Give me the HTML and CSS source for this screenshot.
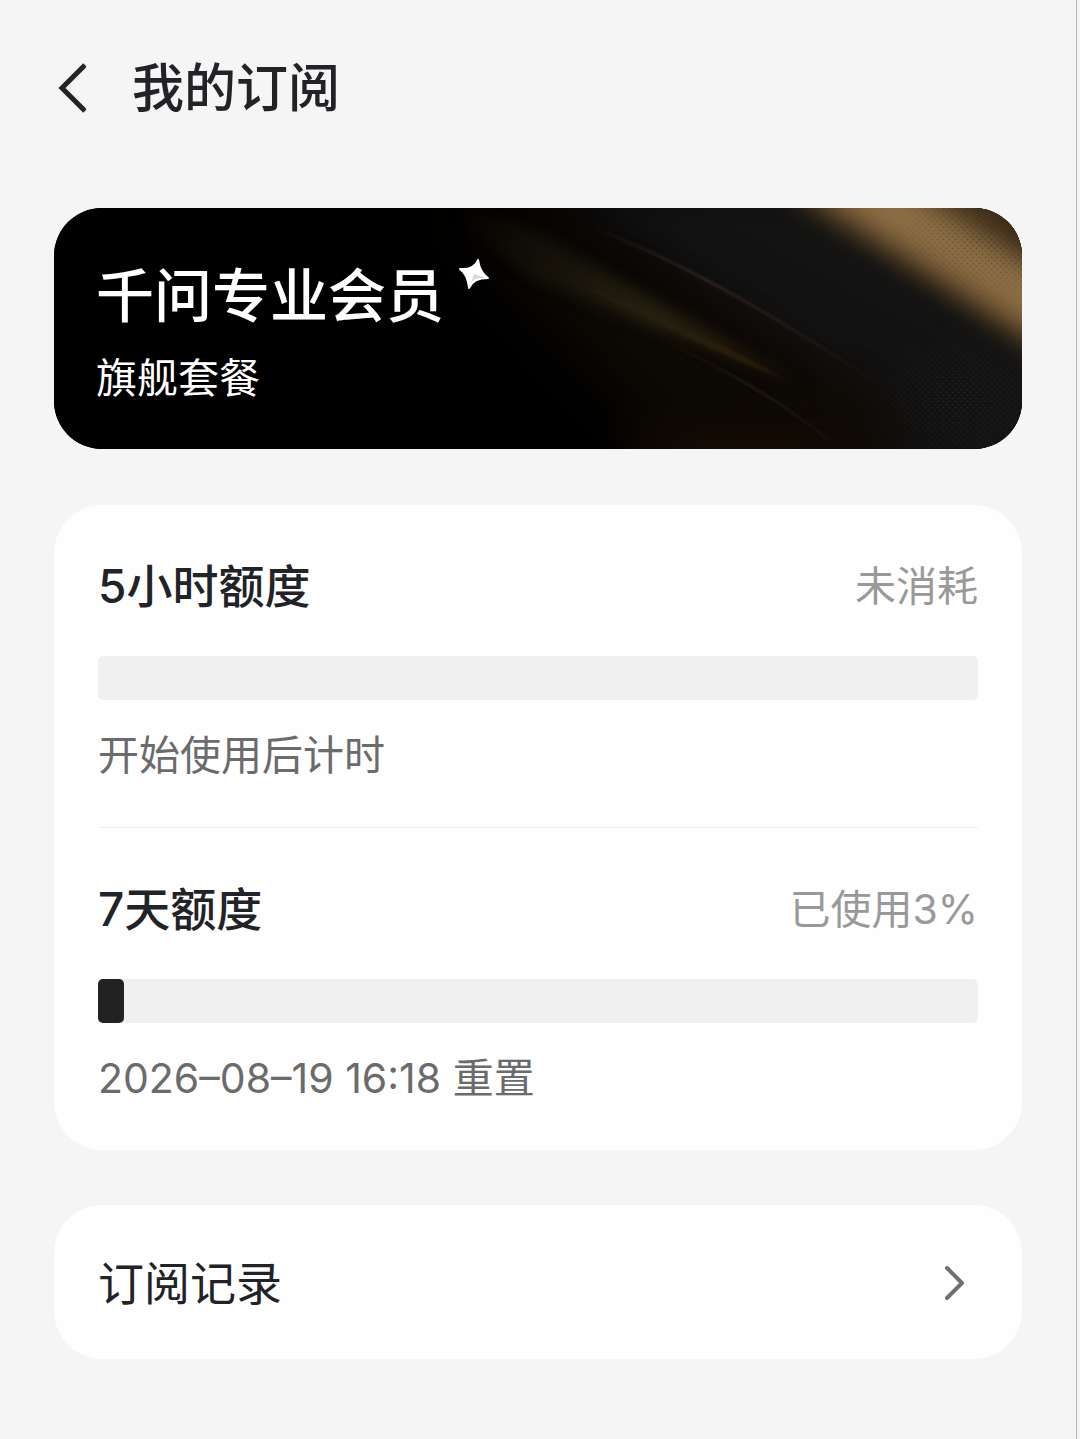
FILE: index.html
```html
<!DOCTYPE html>
<html lang="zh-CN">
<head>
    <meta charset="UTF-8">
    <meta name="viewport" content="width=device-width, initial-scale=1.0">
    <title>我的订阅</title>
    <link rel="stylesheet" href="styles.css">
</head>
<body>

    <div class="page">
        <header class="header">
            <button type="button" class="back" aria-label="返回">
                <svg width="32" height="52" viewBox="0 0 32 52" fill="none" stroke="#222326" stroke-width="5">
                    <path d="M31 2L8 25L31 48" />
                </svg>
            </button>
            <h1>我的订阅</h1>
        </header>

        <section class="member">
            <svg class="member-bg" viewBox="0 0 968 241" preserveAspectRatio="xMaxYMid slice" aria-hidden="true">
                <defs>
                    <filter id="blur1" x="-20%" y="-20%" width="140%" height="140%" color-interpolation-filters="sRGB"><feGaussianBlur stdDeviation="1" /></filter>
                    <filter id="blur6" x="-20%" y="-40%" width="140%" height="180%" color-interpolation-filters="sRGB"><feGaussianBlur stdDeviation="7" /></filter>
                    <filter id="blur12" x="-40%" y="-40%" width="180%" height="180%" color-interpolation-filters="sRGB"><feGaussianBlur stdDeviation="12" /></filter>
                    <filter id="blur40" x="-80%" y="-80%" width="260%" height="260%" color-interpolation-filters="sRGB"><feGaussianBlur stdDeviation="32" /></filter>
                    <linearGradient id="streak" gradientUnits="userSpaceOnUse" x1="400" y1="0" x2="760" y2="190">
                        <stop offset="0" stop-color="#1d190e" stop-opacity="0" />
                        <stop offset="0.550" stop-color="#242010" />
                        <stop offset="0.800" stop-color="#281c0c" />
                        <stop offset="1" stop-color="#2a1d14" stop-opacity="0" />
                    </linearGradient>
                    <linearGradient id="line" gradientUnits="userSpaceOnUse" x1="530" y1="15" x2="830" y2="180">
                        <stop offset="0" stop-color="#30241b" stop-opacity="0" />
                        <stop offset="0.400" stop-color="#30231b" />
                        <stop offset="1" stop-color="#30241b" stop-opacity="0" />
                    </linearGradient>
                    <linearGradient id="line2" gradientUnits="userSpaceOnUse" x1="600" y1="130" x2="780" y2="235">
                        <stop offset="0" stop-color="#2b2119" stop-opacity="0" />
                        <stop offset="0.600" stop-color="#261d16" />
                        <stop offset="1" stop-color="#2b2119" stop-opacity="0.300" />
                    </linearGradient>
                    <radialGradient id="fade">
                        <stop offset="0" stop-color="#fff" />
                        <stop offset="1" stop-color="#fff" stop-opacity="0" />
                    </radialGradient>
                    <pattern id="dots" width="6" height="6" patternUnits="userSpaceOnUse">
                        <circle cx="1.500" cy="1.500" r="1" fill="#333" />
                        <circle cx="4.500" cy="4.500" r="1" fill="#333" />
                    </pattern>
                    <mask id="dotArea">
                        <ellipse cx="905" cy="190" rx="110" ry="80" fill="url(#fade)" />
                        <ellipse cx="945" cy="25" rx="110" ry="70" fill="url(#fade)" />
                    </mask>
                </defs>
                <rect width="968" height="241" fill="#000" />
                <!-- soft base light -->
                <path d="M480 -30L1060 -60L1060 300L880 300Z" fill="#131313" filter="url(#blur40)" />
                <ellipse cx="700" cy="240" rx="120" ry="40" fill="#231206" filter="url(#blur40)" />
                <path d="M400 0L480 0L860 210L820 241L620 241L500 120Z" fill="#0d0904" filter="url(#blur40)" />
                <!-- streaks -->
                <path d="M370 -15L480 24L590 86L760 184L700 157L590 116L480 70Z" fill="url(#streak)" filter="url(#blur6)" />
                <path d="M530 78Q640 118 740 176Q640 136 530 78Z" fill="url(#streak)" filter="url(#blur1)" />
                <path d="M530 16Q660 65 830 180" fill="none" stroke="url(#line)" stroke-width="3" filter="url(#blur1)" />
                <path d="M600 131Q690 165 775 232" fill="none" stroke="url(#line2)" stroke-width="2" filter="url(#blur1)" />
                <!-- gold band -->
                <path d="M730 -14L1010 -60L1010 165L968 136L860 66Z" fill="#4c3820" filter="url(#blur12)" />
                <path d="M750 -24L845 -24L1000 72L1000 136L868 52Z" fill="#8c6e44" filter="url(#blur12)" />
                <path d="M895 -30L1000 -30L1000 55Z" fill="#3a230f" filter="url(#blur12)" />
                <rect width="968" height="241" fill="url(#dots)" mask="url(#dotArea)" opacity="0.600" />
            </svg>
            <div class="member-text">
                <div class="member-title">
                    <h2>千问专业会员</h2>
                    <svg class="spark" width="32" height="32" viewBox="0 0 32 32">
                        <path d="M20 2Q22 15 30 20Q15 20 11 30Q10 17 2 11Q16 12 20 2Z" fill="#fff" stroke="#fff" stroke-width="2" stroke-linejoin="round" />
                        <path d="M16 16L29 20Q16 19 13 25Z" fill="#d8d8d8" />
                    </svg>
                </div>
                <p>旗舰套餐</p>
            </div>
        </section>

        <section class="card">
            <div class="quota">
                <div class="quota-head">
                    <h3 id="quota5h">5小时额度</h3>
                    <span class="used">未消耗</span>
                </div>
                <div class="track" role="progressbar" aria-labelledby="quota5h" aria-valuenow="0">
                    <div class="fill" style="width: 0%"></div>
                </div>
                <p class="note">开始使用后计时</p>
            </div>
            <div class="quota">
                <div class="quota-head">
                    <h3 id="quota7d">7天额度</h3>
                    <span class="used">已使用3%</span>
                </div>
                <div class="track" role="progressbar" aria-labelledby="quota7d" aria-valuenow="3">
                    <div class="fill" style="width: 3%"></div>
                </div>
                <p class="note">2026–08–19 16:18 重置</p>
            </div>
        </section>

        <a href="#" class="card record">
            <span>订阅记录</span>
            <svg width="24" height="36" viewBox="0 0 24 36" fill="none" stroke="#707070" stroke-width="4" stroke-linecap="round" stroke-linejoin="round">
                <path d="M5 3L20 18L5 33" />
            </svg>
        </a>
    </div>

</body>
</html>
```
FILE: styles.css
```css
* {
    box-sizing: border-box;
}
html {
    background-color: #f5f5f5;
}
body {
    margin: 0;
    font-family: Inter, "Noto Sans CJK SC", sans-serif;
    color: #222326;
}
h1, h2, h3, p {
    margin: 0;
}
.page {
    min-height: 100vh;
    margin-right: 3px;
    padding: 49px 54px;
    border-right: 1px solid #b8b8b8;
}
.header {
    display: flex;
    align-items: center;
    gap: 46px;
    margin-bottom: 79px;
}
.header h1 {
    font-size: 52px;
    line-height: 80px;
    font-weight: 500;
}
.back {
    display: flex;
    padding: 0;
    border: none;
    background: none;
    cursor: pointer;
}
.member {
    position: relative;
    overflow: hidden;
    margin-bottom: 56px;
    padding: 48px 42px 47px;
    border-radius: 48px;
    background-color: #000;
    color: #fff;
}
.member-bg {
    position: absolute;
    top: 0;
    left: 0;
    width: 100%;
    height: 100%;
}
.member-text {
    position: relative;
}
.member-title {
    display: flex;
    align-items: flex-start;
    gap: 14px;
    margin-bottom: 18px;
}
.member-title h2 {
    font-size: 58px;
    line-height: 80px;
    font-weight: 500;
}
.spark {
    margin-top: 2px;
}
.member p {
    font-size: 41px;
    line-height: 48px;
}
.card {
    display: block;
    margin-bottom: 55px;
    padding: 0 44px;
    border-radius: 48px;
    background-color: #fefefe;
}
.quota {
    padding: 51px 0 48px;
}
.quota + .quota {
    border-top: 1px solid #f0f0f0;
}
.quota-head {
    display: flex;
    justify-content: space-between;
    align-items: center;
}
.quota h3 {
    font-size: 46px;
    line-height: 60px;
    font-weight: 500;
}
.used {
    font-size: 41px;
    line-height: 60px;
    color: #999;
}
.track {
    height: 44px;
    margin: 40px 0 31px;
    border-radius: 5px;
    background-color: #f0f0f0;
}
.fill {
    height: 100%;
    border-radius: 5px;
    background-color: #222;
}
.note {
    font-size: 41px;
    line-height: 48px;
    color: #6b6b6b;
}
.record {
    display: flex;
    justify-content: space-between;
    align-items: center;
    padding: 48px 56px 46px 44px;
    font-size: 46px;
    line-height: 60px;
    color: #222326;
    text-decoration: none;
}
```
